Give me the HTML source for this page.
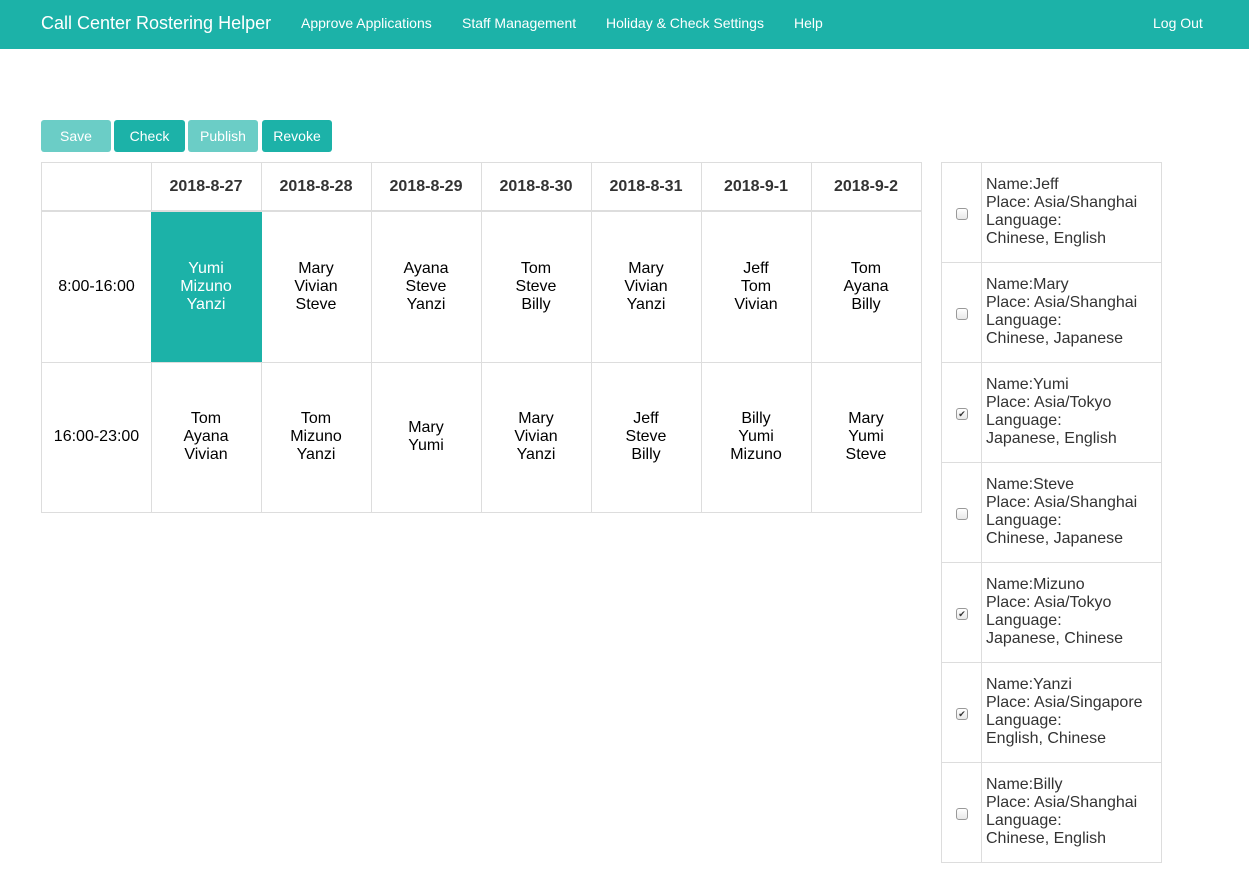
<!DOCTYPE html>
<html><head><meta charset="utf-8"><style>
*{box-sizing:border-box;margin:0;padding:0}
body{width:1249px;height:894px;background:#fff;font-family:"Liberation Sans",sans-serif;font-size:16px;color:#000;position:relative;overflow:hidden}
.nav{position:absolute;left:0;top:0;width:1249px;height:49px;background:#1cb2a8;color:#fff}
.nav span{position:absolute;top:15px;font-size:14px;line-height:16px}
.nav .brand{left:41px;top:13px;font-size:18px;line-height:20px}
.btn{position:absolute;top:120px;height:32px;border-radius:3px;color:#fff;font-size:14px;line-height:32px;text-align:center;background:#1cb2a8}
.btn.dis{background:#6bcdc6}
.c{position:absolute;border-right:1px solid #ddd;border-bottom:1px solid #ddd;display:flex;align-items:center;justify-content:center;text-align:center;line-height:18px}
.h{font-weight:bold;color:#333}
.s{position:absolute;border-left:1px solid #ddd;border-right:1px solid #ddd;border-bottom:1px solid #ddd;color:#333;line-height:18px}
.cb{position:absolute;left:14px;top:45px;width:12px;height:12px;border:1px solid #999;border-radius:3px;background:linear-gradient(#fff,#e8e8e8);font-size:9px;line-height:10px;text-align:center;color:#333}
.sd{position:absolute;left:39px;top:0;height:100%;border-left:1px solid #ddd;padding:13px 0 0 4px}
</style></head><body>
<div class="nav">
<span class="brand">Call Center Rostering Helper</span>
<span style="left:301px">Approve Applications</span>
<span style="left:462px">Staff Management</span>
<span style="left:606px">Holiday &amp; Check Settings</span>
<span style="left:794px">Help</span>
<span style="left:1153px">Log Out</span>
</div>
<div class="btn dis" style="left:41px;width:70px">Save</div>
<div class="btn" style="left:114px;width:71px">Check</div>
<div class="btn dis" style="left:188px;width:70px">Publish</div>
<div class="btn" style="left:262px;width:70px">Revoke</div>

<div style="position:absolute;left:41px;top:162px;width:881px;height:351px;border-left:1px solid #ddd;border-top:1px solid #ddd"></div>
<div style="position:absolute;left:41px;top:210px;width:880px;height:2px;background:#ddd"></div>

<div class="c" style="left:41px;top:162px;width:111px;height:50px;border-left:1px solid #ddd;border-top:1px solid #ddd"></div>
<div class="c h" style="left:151px;top:162px;width:111px;height:50px;border-top:1px solid #ddd">2018-8-27</div>
<div class="c h" style="left:261px;top:162px;width:111px;height:50px;border-top:1px solid #ddd">2018-8-28</div>
<div class="c h" style="left:371px;top:162px;width:111px;height:50px;border-top:1px solid #ddd">2018-8-29</div>
<div class="c h" style="left:481px;top:162px;width:111px;height:50px;border-top:1px solid #ddd">2018-8-30</div>
<div class="c h" style="left:591px;top:162px;width:111px;height:50px;border-top:1px solid #ddd">2018-8-31</div>
<div class="c h" style="left:701px;top:162px;width:111px;height:50px;border-top:1px solid #ddd">2018-9-1</div>
<div class="c h" style="left:811px;top:162px;width:111px;height:50px;border-top:1px solid #ddd">2018-9-2</div>

<div class="c" style="left:41px;top:212px;width:111px;height:151px;border-left:1px solid #ddd">8:00-16:00</div>
<div class="c" style="left:151px;top:212px;width:111px;height:151px;background:#1cb2a8;color:#fff;border-right:1px solid #1cb2a8">Yumi<br>Mizuno<br>Yanzi</div>
<div class="c" style="left:261px;top:212px;width:111px;height:151px">Mary<br>Vivian<br>Steve</div>
<div class="c" style="left:371px;top:212px;width:111px;height:151px">Ayana<br>Steve<br>Yanzi</div>
<div class="c" style="left:481px;top:212px;width:111px;height:151px">Tom<br>Steve<br>Billy</div>
<div class="c" style="left:591px;top:212px;width:111px;height:151px">Mary<br>Vivian<br>Yanzi</div>
<div class="c" style="left:701px;top:212px;width:111px;height:151px">Jeff<br>Tom<br>Vivian</div>
<div class="c" style="left:811px;top:212px;width:111px;height:151px">Tom<br>Ayana<br>Billy</div>

<div class="c" style="left:41px;top:362px;width:111px;height:151px;border-left:1px solid #ddd">16:00-23:00</div>
<div class="c" style="left:151px;top:362px;width:111px;height:151px">Tom<br>Ayana<br>Vivian</div>
<div class="c" style="left:261px;top:362px;width:111px;height:151px">Tom<br>Mizuno<br>Yanzi</div>
<div class="c" style="left:371px;top:362px;width:111px;height:151px">Mary<br>Yumi</div>
<div class="c" style="left:481px;top:362px;width:111px;height:151px">Mary<br>Vivian<br>Yanzi</div>
<div class="c" style="left:591px;top:362px;width:111px;height:151px">Jeff<br>Steve<br>Billy</div>
<div class="c" style="left:701px;top:362px;width:111px;height:151px">Billy<br>Yumi<br>Mizuno</div>
<div class="c" style="left:811px;top:362px;width:111px;height:151px">Mary<br>Yumi<br>Steve</div>

<div style="position:absolute;left:941px;top:162px;width:221px;height:1px;background:#ddd"></div>
<div class="s" style="left:941px;top:163px;width:221px;height:100px"><div class="cb"></div><div class="sd">Name:Jeff<br>Place: Asia/Shanghai<br>Language:<br>Chinese, English</div></div>
<div class="s" style="left:941px;top:263px;width:221px;height:100px"><div class="cb"></div><div class="sd">Name:Mary<br>Place: Asia/Shanghai<br>Language:<br>Chinese, Japanese</div></div>
<div class="s" style="left:941px;top:363px;width:221px;height:100px"><div class="cb">✔</div><div class="sd">Name:Yumi<br>Place: Asia/Tokyo<br>Language:<br>Japanese, English</div></div>
<div class="s" style="left:941px;top:463px;width:221px;height:100px"><div class="cb"></div><div class="sd">Name:Steve<br>Place: Asia/Shanghai<br>Language:<br>Chinese, Japanese</div></div>
<div class="s" style="left:941px;top:563px;width:221px;height:100px"><div class="cb">✔</div><div class="sd">Name:Mizuno<br>Place: Asia/Tokyo<br>Language:<br>Japanese, Chinese</div></div>
<div class="s" style="left:941px;top:663px;width:221px;height:100px"><div class="cb">✔</div><div class="sd">Name:Yanzi<br>Place: Asia/Singapore<br>Language:<br>English, Chinese</div></div>
<div class="s" style="left:941px;top:763px;width:221px;height:100px"><div class="cb"></div><div class="sd">Name:Billy<br>Place: Asia/Shanghai<br>Language:<br>Chinese, English</div></div>
</body></html>
